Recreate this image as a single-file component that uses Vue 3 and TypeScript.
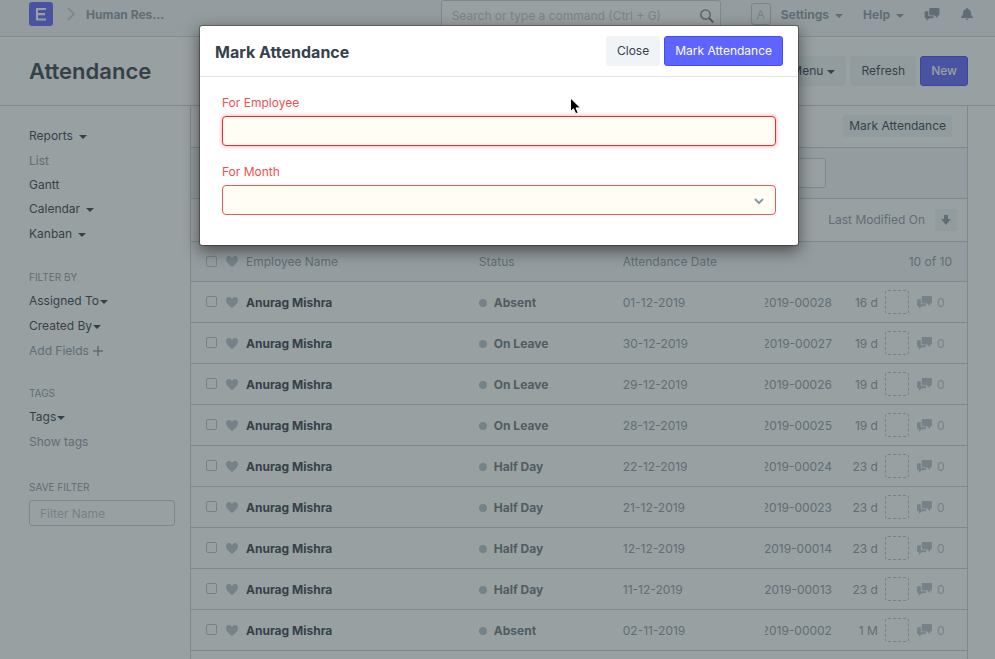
<script setup lang="ts">
import { ref } from 'vue'

interface Attendance {
  status: string
  date: string
  id: string
  modified: string
}

interface SideLink {
  label: string
  caret: boolean
  muted?: boolean
}

const employee = 'Anurag Mishra'

const rows: Attendance[] = [
  { status: 'Absent', date: '01-12-2019', id: '2019-00028', modified: '16 d' },
  { status: 'On Leave', date: '30-12-2019', id: '2019-00027', modified: '19 d' },
  { status: 'On Leave', date: '29-12-2019', id: '2019-00026', modified: '19 d' },
  { status: 'On Leave', date: '28-12-2019', id: '2019-00025', modified: '19 d' },
  { status: 'Half Day', date: '22-12-2019', id: '2019-00024', modified: '23 d' },
  { status: 'Half Day', date: '21-12-2019', id: '2019-00023', modified: '23 d' },
  { status: 'Half Day', date: '12-12-2019', id: '2019-00014', modified: '23 d' },
  { status: 'Half Day', date: '11-12-2019', id: '2019-00013', modified: '23 d' },
  { status: 'Absent', date: '02-11-2019', id: '2019-00002', modified: '1 M' },
]

const views: SideLink[] = [
  { label: 'Reports', caret: true },
  { label: 'List', caret: false, muted: true },
  { label: 'Gantt', caret: false },
  { label: 'Calendar', caret: true },
  { label: 'Kanban', caret: true },
]

const forEmployee = ref('')
const forMonth = ref('')

const heart =
  'M11.2 3c-.52-.63-1.25-.95-2.2-1-.97 0-1.69.42-2.2 1-.51.58-.78.92-.8 1-.02-.08-.28-.42-.8-1-.52-.58-1.17-1-2.2-1-.95.05-1.69.38-2.2 1-.52.61-.78 1.28-.8 2 0 .52.09 1.52.67 2.67C1.25 8.82 3.01 10.61 6 13c2.98-2.39 4.77-4.17 5.34-5.33C11.91 6.51 12 5.5 12 5c-.02-.72-.28-1.39-.8-2z'
const bubbles =
  'M6 0h9q1 0 1 1v6q0 1-1 1h-1v3l-3-3H6q-1 0-1-1V1q0-1 1-1zM1 3.5h3v4.3q0 1.2 1.2 1.2h4.6v1q0 1-1 1H5l-3 3v-3H1q-1 0-1-1V4.5q0-1 1-1z'
</script>

<template>
  <div class="page">
    <header class="navbar">
      <a href="#" class="logo" aria-label="Home">
        <svg viewBox="0 0 24 24" width="24" height="24">
          <rect width="24" height="24" rx="3" fill="#5e64ff" />
          <path d="M17 7H8v10.500H17M8 12.200h8" fill="none" stroke="#fff" stroke-width="2.200" />
        </svg>
      </a>
      <svg class="crumb" viewBox="0 0 8 14" width="8" height="14">
        <path d="M1 1l6 6-6 6" fill="none" stroke="#b8c2cc" stroke-width="1.500" />
      </svg>
      <a href="#" class="nav-link">Human Res...</a>
      <div class="search">
        <input type="text" placeholder="Search or type a command (Ctrl + G)" aria-label="Search" />
        <svg viewBox="0 0 14 14" width="14" height="14">
          <circle cx="5.500" cy="5.500" r="4.700" fill="none" stroke="#6c7680" stroke-width="1.300" />
          <path d="M9 9l4.300 4.300" stroke="#6c7680" stroke-width="1.800" />
        </svg>
      </div>
      <span class="avatar">A</span>
      <a href="#" class="nav-link">Settings<i class="caret"></i></a>
      <a href="#" class="nav-link help">Help<i class="caret"></i></a>
      <a href="#" class="nav-icon" aria-label="Chat">
        <svg viewBox="0 0 16 14" width="16" height="13"><path :d="bubbles" /></svg>
      </a>
      <a href="#" class="nav-icon bell" aria-label="Notifications">
        <svg viewBox="0 0 12 12" width="12" height="12">
          <path d="M6 0c.6 0 1 .4 1 1 1.800.4 2.800 1.800 2.900 3.500.1 2.500.6 3.300 2.100 4.500v1H0V9c1.500-1.200 2-2 2.100-4.500C2.200 2.800 3.200 1.400 5 1c0-.6.4-1 1-1zM4.500 10.600h3c-.2.900-.8 1.400-1.500 1.400s-1.300-.5-1.500-1.400z" />
        </svg>
      </a>
    </header>

    <div class="page-head">
      <h1>Attendance</h1>
      <div class="actions">
        <button type="button" class="btn">Menu<i class="caret near"></i></button>
        <button type="button" class="btn">Refresh</button>
        <button type="button" class="btn primary strong">New</button>
      </div>
    </div>

    <div class="body">
      <aside class="sidebar">
        <nav class="group">
          <a v-for="v in views" :key="v.label" href="#" :class="{ muted: v.muted, tall: v.caret }">
            {{ v.label }}<i v-if="v.caret" class="caret"></i>
          </a>
        </nav>
        <section class="group">
          <h2>FILTER BY</h2>
          <a href="#" class="tall">Assigned To<i class="caret tight"></i></a>
          <a href="#" class="tall">Created By<i class="caret tight"></i></a>
          <a href="#" class="muted">
            Add Fields
            <svg class="plus" viewBox="0 0 10 10" width="10" height="10">
              <path d="M5 0v10M0 5h10" stroke="#8d99a6" stroke-width="1.500" />
            </svg>
          </a>
        </section>
        <section class="group">
          <h2>TAGS</h2>
          <a href="#" class="tall">Tags<i class="caret tight"></i></a>
          <a href="#" class="muted tall">Show tags</a>
        </section>
        <section class="group save">
          <h2>SAVE FILTER</h2>
          <input type="text" placeholder="Filter Name" aria-label="Filter Name" />
        </section>
      </aside>

      <main class="list">
        <div class="bar top-bar">
          <button type="button" class="btn small">Mark Attendance</button>
        </div>
        <div class="bar filter-bar">
          <input type="text" aria-label="Name" />
        </div>
        <div class="bar sort-bar">
          <a href="#" class="muted">Last Modified On</a>
          <button type="button" class="btn small sort" aria-label="Sort descending">
            <svg viewBox="0 0 10 10" width="10" height="10">
              <path d="M7 4V0H3v4H0l5 6 5-6z" />
            </svg>
          </button>
        </div>
        <table>
          <colgroup>
            <col class="c-check" />
            <col class="c-heart" />
            <col class="c-name" />
            <col class="c-status" />
            <col />
            <col class="c-id" />
            <col class="c-mod" />
            <col class="c-box" />
            <col class="c-comments" />
          </colgroup>
          <thead>
            <tr>
              <th class="first"><input type="checkbox" aria-label="Select all" /></th>
              <th><svg class="heart" viewBox="0 2 12 11" width="12" height="11"><path :d="heart" /></svg></th>
              <th>Employee Name</th>
              <th>Status</th>
              <th>Attendance Date</th>
              <th colspan="4" class="count">10 of 10</th>
            </tr>
          </thead>
          <tbody>
            <tr v-for="row in rows" :key="row.id">
              <td class="first"><input type="checkbox" :aria-label="row.id" /></td>
              <td><svg class="heart" viewBox="0 2 12 11" width="12" height="11"><path :d="heart" /></svg></td>
              <td><a href="#" class="name">{{ employee }}</a></td>
              <td class="status"><i class="dot"></i>{{ row.status }}</td>
              <td>{{ row.date }}</td>
              <td><div class="id">{{ row.id }}</div></td>
              <td class="modified">{{ row.modified }}</td>
              <td class="box-cell"><div class="assign"></div></td>
              <td>
                <div class="comments">
                  <svg viewBox="0 0 16 14" width="15" height="13"><path :d="bubbles" /></svg>
                  <span>0</span>
                </div>
              </td>
            </tr>
            <tr><td colspan="9"></td></tr>
          </tbody>
        </table>
      </main>
    </div>

    <div class="backdrop"></div>
    <div class="overlay">
      <form class="dialog" role="dialog" aria-labelledby="dialog-title" @submit.prevent>
        <div class="dialog-head">
          <h2 id="dialog-title">Mark Attendance</h2>
          <button type="button" class="btn">Close</button>
          <button type="submit" class="btn primary">Mark Attendance</button>
        </div>
        <div class="dialog-body">
          <div class="field">
            <label for="employee">For Employee</label>
            <input id="employee" v-model="forEmployee" type="text" class="focused" />
          </div>
          <div class="field">
            <label for="month">For Month</label>
            <div class="select">
              <select id="month" v-model="forMonth"><option value=""></option></select>
              <svg viewBox="0 0 10 7" width="10" height="7">
                <path d="M1 1l4 4 4-4" fill="none" stroke="#8d99a6" stroke-width="2" />
              </svg>
            </div>
          </div>
        </div>
      </form>
      <svg class="pointer" viewBox="0 0 12 18" width="12" height="18">
        <path d="M1.500 1v13.500l3-2.800 2.200 5 2.500-1-2.200-4.800h4.500z" fill="#000" stroke="#fff" stroke-width="1" />
      </svg>
    </div>
  </div>
</template>

<style>
body {
  overflow: hidden;
  background: #fff;
}
</style>

<style scoped>
* {
  box-sizing: border-box;
}
.page {
  position: relative;
  height: 100vh;
  overflow: hidden;
  font-family: Inter, "Liberation Sans", sans-serif;
  font-size: 12px;
  line-height: 18px;
  color: #36414c;
}
a {
  color: inherit;
  text-decoration: none;
}
h1,
h2 {
  margin: 0;
}
input,
button,
select {
  font: inherit;
  color: inherit;
}
svg {
  display: block;
  flex: none;
}
.muted {
  color: #8d99a6;
}
.caret {
  display: inline-block;
  border: 4px solid transparent;
  border-top-color: currentColor;
  border-bottom: 0;
  margin-left: 6px;
  vertical-align: 1px;
}
.caret.near {
  margin-left: 4px;
}
.caret.tight {
  margin-left: 1px;
}

.navbar {
  display: flex;
  align-items: center;
  height: 37px;
  padding: 0 22px 8px 29px;
  background: #f5f7fa;
  border-bottom: 1px solid #d1d8dd;
  color: #8d99a6;
}
.logo {
  margin-right: 14px;
}
.crumb {
  margin-right: 11px;
}
.nav-link {
  padding-top: 2px;
  font-weight: 700;
  white-space: nowrap;
}
.search {
  display: flex;
  align-items: center;
  width: 280px;
  height: 28px;
  margin-left: auto;
  margin-right: 30px;
  padding: 3px 6px 0 10px;
  border: 1px solid #c8d0d6;
  border-radius: 3px;
  background: #fff;
}
.search input {
  flex: 1;
  min-width: 0;
  padding: 0;
  border: 0;
  background: none;
}
.search input::placeholder {
  color: #c0c8ce;
  opacity: 1;
}
.avatar {
  width: 20px;
  height: 22px;
  margin-right: 10px;
  border: 1px solid #c0c8ce;
  border-radius: 3px;
  line-height: 22px;
  text-align: center;
  color: #c0c8ce;
}
.help {
  margin: 0 20px;
}
.nav-icon svg {
  fill: #8d99a6;
}
.bell {
  margin-left: 21px;
}

.page-head {
  display: flex;
  align-items: center;
  justify-content: space-between;
  height: 69px;
  padding: 0 27px 0 29px;
  border-bottom: 1px solid #c8d0d6;
}
.page-head h1 {
  font-size: 22px;
  line-height: 32px;
  font-weight: 600;
}
.actions {
  display: flex;
  gap: 4px;
}
.btn {
  height: 30px;
  padding: 0 10px;
  border: 1px solid transparent;
  border-radius: 3px;
  background: #f0f4f7;
  line-height: 18px;
  white-space: nowrap;
}
.btn.primary {
  background: #5e64ff;
  border-color: #444bff;
  color: #fff;
}
.btn.strong {
  font-weight: 500;
}
.btn.small {
  height: 22px;
  padding: 0 5px;
}

.body {
  display: flex;
  padding: 0 27px 0 29px;
}
.sidebar {
  width: 161px;
  flex: none;
  padding: 19px 15px 0 0;
}
.group {
  display: flex;
  flex-direction: column;
  margin-bottom: 19px;
}
.group a {
  display: block;
  height: 24px;
  line-height: 22px;
}
.group a.tall {
  height: 25px;
}
.group h2 {
  height: 23px;
  font-size: 10px;
  line-height: 20px;
  font-weight: 400;
  color: #8d99a6;
}
.group.save {
  padding-top: 2px;
}
.plus {
  display: inline-block;
  margin-left: 1px;
  vertical-align: -1px;
}
.group input {
  width: 100%;
  height: 26px;
  padding: 0 10px;
  border: 1px solid #c8d0d6;
  border-radius: 3px;
  background: none;
}
.group input::placeholder {
  color: #b8c2cc;
  opacity: 1;
}

.list {
  flex: 1;
  min-width: 0;
  border: 1px solid #c8d0d6;
  border-width: 0 1px;
}
.bar {
  display: flex;
  align-items: center;
  padding: 0 15px;
  border-bottom: 1px solid #c8d0d6;
}
.top-bar {
  justify-content: flex-end;
  height: 42px;
  padding-bottom: 2px;
}
.filter-bar {
  height: 51px;
  background: #f5f7fa;
}
.filter-bar input {
  width: 100%;
  max-width: 620px;
  height: 30px;
  border: 1px solid #c8d0d6;
  border-radius: 3px;
  background: #fff;
}
.sort-bar {
  justify-content: flex-end;
  gap: 10px;
  height: 43px;
  padding-right: 10px;
}
.sort svg {
  fill: #8d99a6;
}
.btn.sort {
  width: 22px;
}

table {
  width: 100%;
  table-layout: fixed;
  border-collapse: collapse;
  color: #8d99a6;
}
.c-check {
  width: 35px;
}
.c-heart {
  width: 20px;
}
.c-name {
  width: 30%;
}
.c-status {
  width: 144px;
}
.c-id {
  width: 67px;
}
.c-mod {
  width: 46px;
}
.c-box {
  width: 39px;
}
.c-comments {
  width: 50px;
}
tr {
  border-bottom: 1px solid #c8d0d6;
}
th,
td {
  height: 41px;
  padding: 2px 0 0;
  text-align: left;
  font-weight: 400;
  white-space: nowrap;
}
th {
  height: 40px;
  padding-top: 1px;
  background: #f5f7fa;
}
thead tr {
  height: 39px;
}
thead th {
  height: 39px;
}
.first {
  padding: 0 0 0 15px;
}
.first input {
  appearance: none;
  display: block;
  width: 11px;
  height: 11px;
  margin: 0;
  border: 1px solid #b8c2cc;
  border-radius: 2px;
}
.heart {
  fill: #b8c2cc;
}
th.count {
  padding-right: 15px;
  text-align: right;
}
.name {
  font-weight: 700;
  color: #36414c;
}
.status {
  font-weight: 700;
  color: #6c7680;
}
.dot {
  display: inline-block;
  width: 8px;
  height: 8px;
  margin-right: 7px;
  border-radius: 50%;
  background: #b8c2cc;
}
.id {
  display: flex;
  justify-content: flex-end;
  overflow: hidden;
}
.modified {
  text-align: right;
}
.box-cell {
  padding-top: 0;
}
.assign {
  width: 24px;
  height: 24px;
  margin-left: 7px;
  border: 1px dashed #b8c2cc;
  border-radius: 3px;
}
.comments {
  display: flex;
  align-items: center;
  gap: 5px;
  color: #b8c2cc;
}
.comments svg {
  fill: #b8c2cc;
}

.backdrop {
  position: absolute;
  inset: 0;
  background: #334143;
  opacity: 0.5;
}
.overlay {
  position: absolute;
  inset: 0;
  padding: 25px 0 0 3px;
}
.dialog {
  width: 600px;
  max-width: 100%;
  margin: 0 auto;
  border: 1px solid rgba(0, 0, 0, 0.3);
  border-radius: 3px;
  background: #fff;
  background-clip: padding-box;
  box-shadow: 0 5px 15px rgba(0, 0, 0, 0.5);
}
.dialog-head {
  display: flex;
  align-items: center;
  gap: 4px;
  height: 51px;
  padding: 0 15px;
  border-bottom: 1px solid #e3e6e8;
}
.dialog-head h2 {
  margin-right: auto;
  padding-top: 2px;
  font-size: 16px;
  line-height: 24px;
  font-weight: 700;
}
.dialog-body {
  padding: 17px 22px 30px;
}
.field + .field {
  margin-top: 17px;
}
.field label {
  display: block;
  margin-bottom: 4px;
  color: #f04f50;
}
.field input,
.field select {
  appearance: none;
  display: block;
  width: 100%;
  height: 30px;
  padding: 0 10px;
  border: 1px solid #f25556;
  border-radius: 4px;
  outline: 0;
  background: #fffdf4;
}
.field .focused {
  border-color: #f02d2d;
  box-shadow: 0 0 4px rgba(255, 60, 60, 0.5);
}
.select {
  position: relative;
}
.select svg {
  position: absolute;
  top: 13px;
  right: 12px;
}
.pointer {
  position: absolute;
  top: 97px;
  left: 569px;
}
</style>
